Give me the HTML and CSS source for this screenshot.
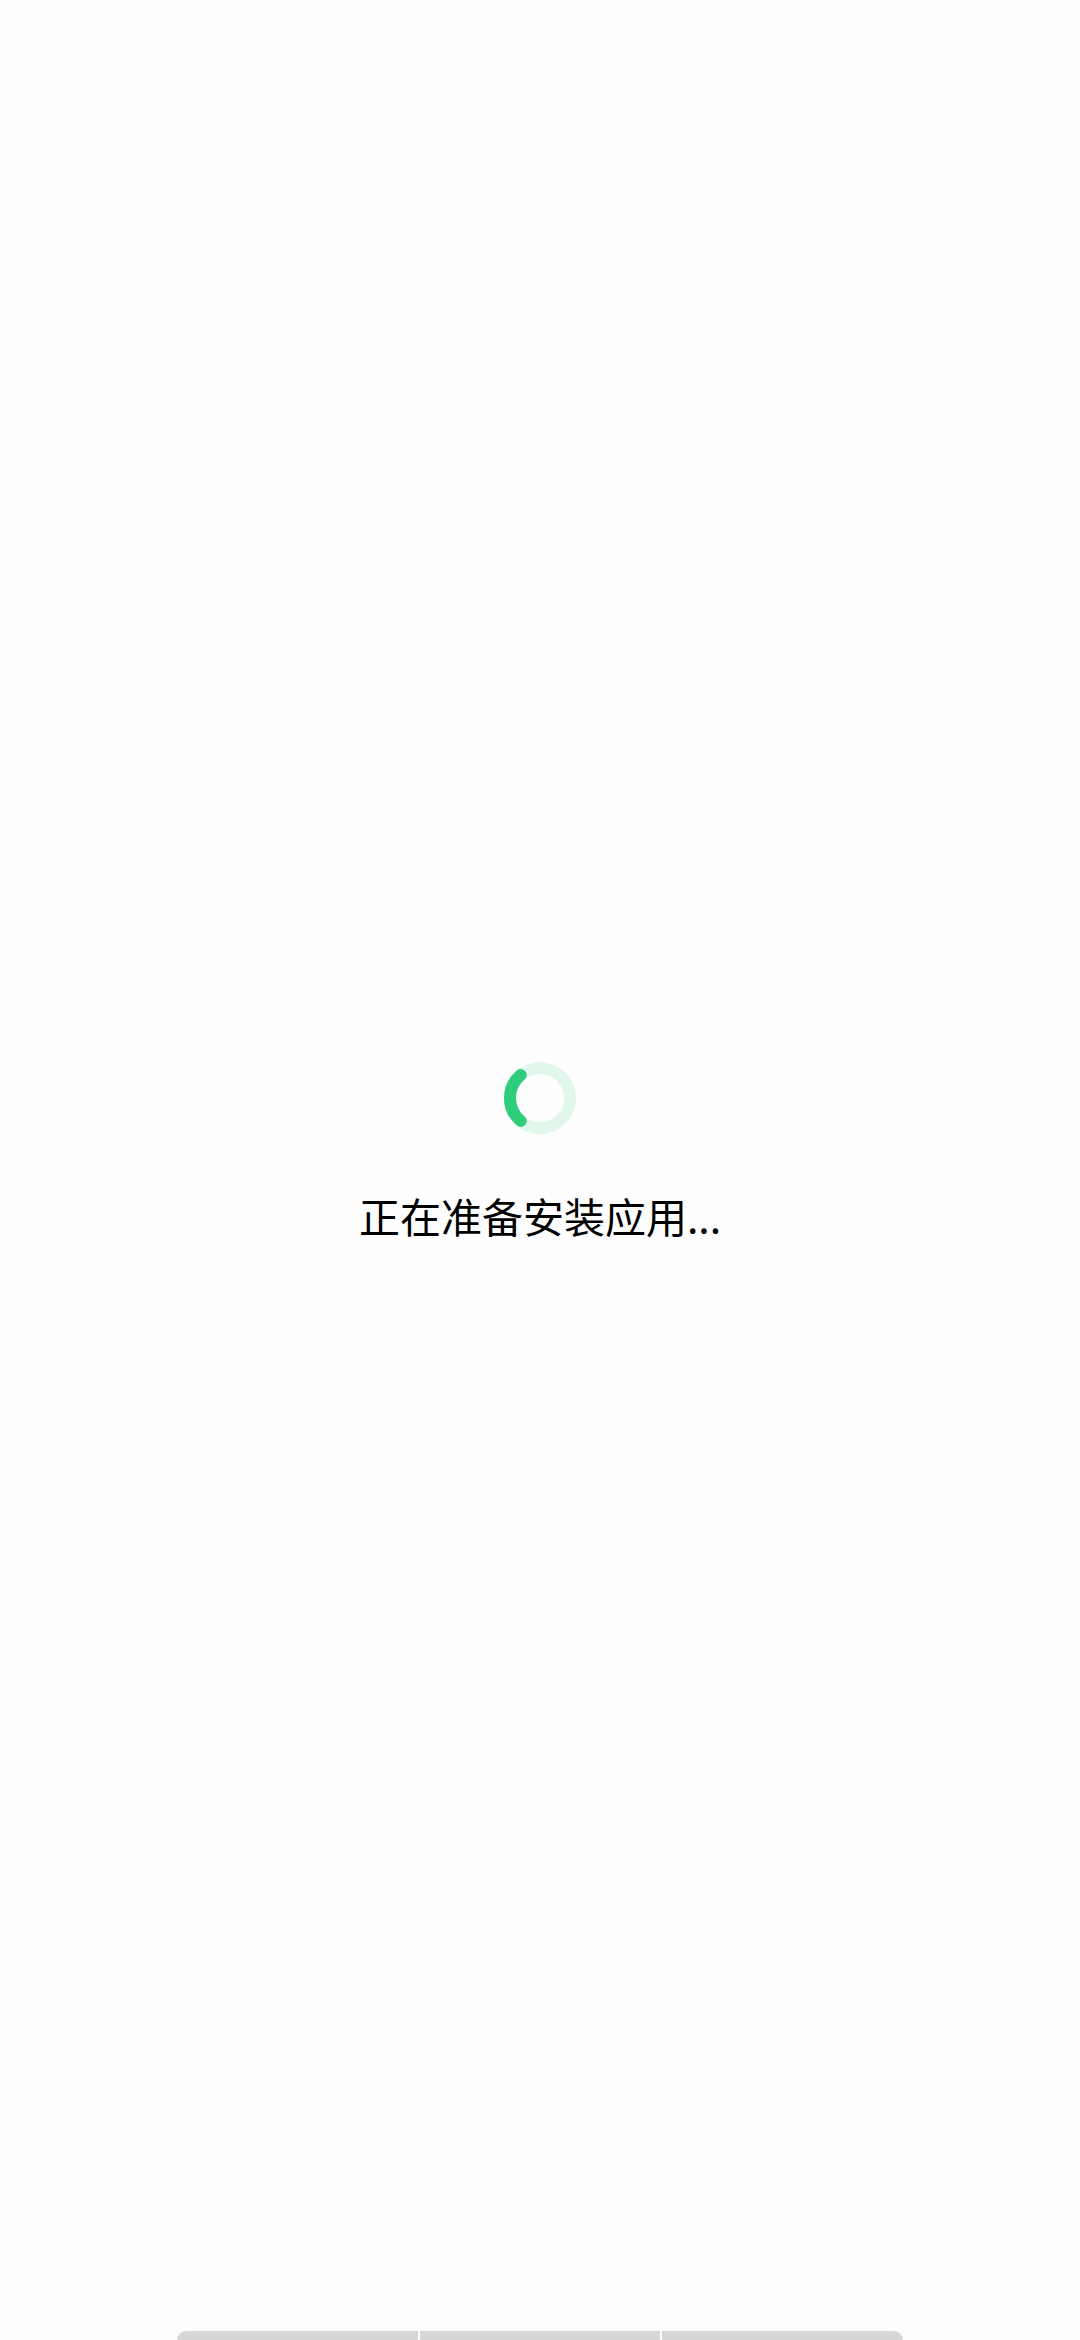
FILE: index.html
```html
<!DOCTYPE html>
<html lang="zh-CN">
<head>
<meta charset="utf-8">
<title>正在准备安装应用</title>
<link rel="stylesheet" href="styles.css">
</head>
<body>
<div class="screen">
  <main class="content">
    <svg class="spinner" width="72" height="72" viewBox="0 0 72 72">
      <circle cx="36" cy="36" r="30" fill="none" stroke="#e1f7ec" stroke-width="12"/>
      <path d="M16.72 13.02 A30 30 0 0 0 16.72 58.98" fill="none" stroke="#2ecc7b" stroke-width="12" stroke-linecap="round"/>
    </svg>
    <p class="message">正在准备安装应用...</p>
  </main>
  <div class="nav">
    <span class="seg seg-left"></span>
    <span class="seg"></span>
    <span class="seg seg-right"></span>
  </div>
</div>
</body>
</html>
```
FILE: styles.css
```css
html, body {
  margin: 0;
  padding: 0;
  background: #ffffff;
}
.screen {
  width: 1080px;
  height: 2340px;
  display: flex;
  flex-direction: column;
  overflow: hidden;
  background: #fefefe;
}
.content {
  flex: 1;
  display: flex;
  flex-direction: column;
  align-items: center;
  padding-top: 1062px;
}
.spinner {
  display: block;
  width: 72px;
  height: 72px;
}
.message {
  margin: 51px 0 0 0;
  font-family: "Noto Sans CJK SC", "Noto Sans", sans-serif;
  font-size: 41px;
  line-height: 60px;
  color: #000000;
  letter-spacing: 0;
}
.nav {
  display: flex;
  gap: 2px;
  margin: 0 177px 0 177px;
  height: 9px;
}
.seg {
  flex: 1;
  background: #d6d6d6;
}
.seg-left {
  border-top-left-radius: 9px;
}
.seg-right {
  border-top-right-radius: 9px;
}
```
